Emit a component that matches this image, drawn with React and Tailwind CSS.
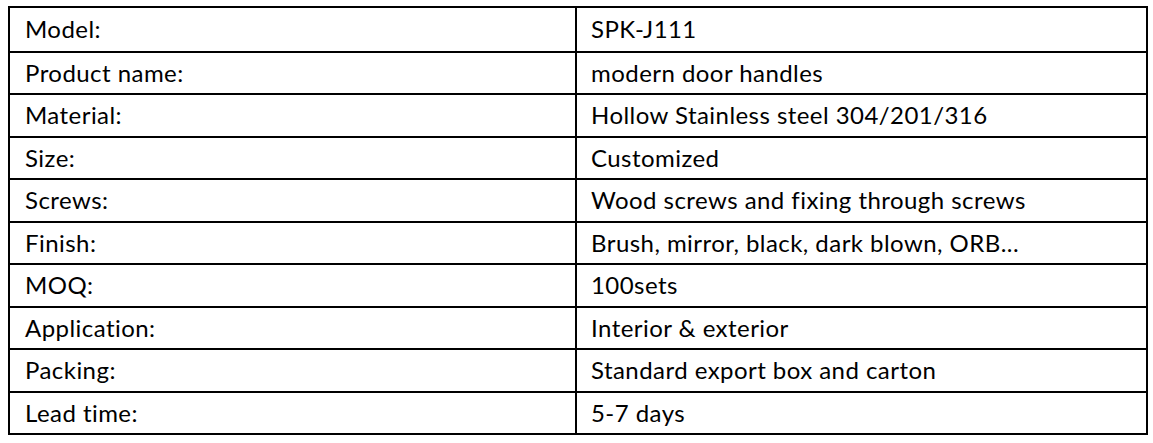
export default function App() {
  const rows = [
    ["Model:", "SPK-J111"],
    ["Product name:", "modern door handles"],
    ["Material:", "Hollow Stainless steel 304/201/316"],
    ["Size:", "Customized"],
    ["Screws:", "Wood screws and fixing through screws"],
    ["Finish:", "Brush, mirror, black, dark blown, ORB..."],
    ["MOQ:", "100sets"],
    ["Application:", "Interior & exterior"],
    ["Packing:", "Standard export box and carton"],
    ["Lead time:", "5-7 days"],
  ];
  return (
    <div className="w-[1153px] h-[443px] bg-white pt-[6px] pl-[8px]" style={{ fontFamily: "Lato, 'Open Sans', sans-serif" }}>
      <div className="w-[1140px] border-2 border-black flex flex-col text-[24px] tracking-[0.45px] text-black">
        {rows.map(([a, b], i) => (
          <div key={i} className={`flex h-[42.5px] ${i > 0 ? "border-t-2 border-black" : ""}`}>
            <div className="w-[567px] border-r-2 border-black pl-[15px] flex items-center">{a}</div>
            <div className="flex-1 pl-[14px] flex items-center">{b}</div>
          </div>
        ))}
      </div>
    </div>
  );
}
